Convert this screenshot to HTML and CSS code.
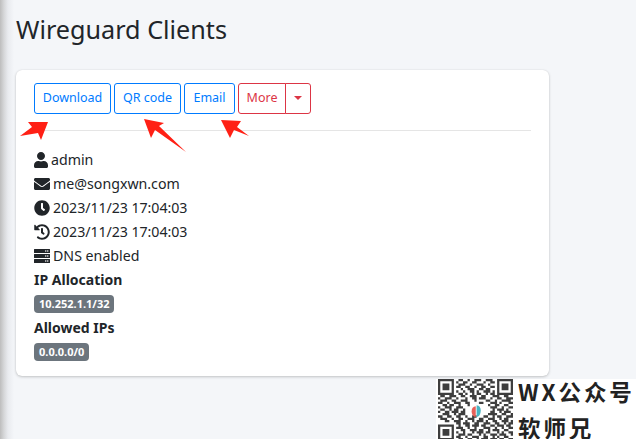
FILE: index.html
```html
<!DOCTYPE html>
<html lang="en">
<head>
<meta charset="utf-8">
<title>Wireguard Clients</title>
<link rel="stylesheet" href="styles.css">
</head>
<body>
<main class="page">
  <h1 class="title">Wireguard Clients</h1>
  <section class="card">
    <div class="actions">
      <button class="btn btn-blue btn-download">Download</button>
      <button class="btn btn-blue btn-qr">QR code</button>
      <button class="btn btn-blue btn-email">Email</button>
      <div class="split">
        <button class="btn btn-red btn-more">More</button>
        <button class="btn btn-red btn-caret" aria-label="More options"><span class="caret"></span></button>
      </div>
    </div>
    <hr class="rule">
    <ul class="info">
      <li><svg class="ico ico-user" viewBox="0 0 448 512"><path d="M224 256c70.7 0 128-57.3 128-128S294.7 0 224 0 96 57.3 96 128s57.3 128 128 128zm89.6 32h-16.7c-22.2 10.2-46.9 16-72.9 16s-50.6-5.8-72.9-16h-16.7C60.2 288 0 348.2 0 422.4V464c0 26.5 21.5 48 48 48h352c26.5 0 48-21.5 48-48v-41.6c0-74.2-60.2-134.4-134.4-134.4z"/></svg><span>admin</span></li>
      <li><svg class="ico" viewBox="0 0 512 512"><path d="M502.3 190.8c3.9-3.1 9.7-.2 9.7 4.7V400c0 26.5-21.5 48-48 48H48c-26.5 0-48-21.5-48-48V195.6c0-5 5.7-7.8 9.7-4.7 22.4 17.4 52.1 39.5 154.1 113.6 21.1 15.4 56.7 47.8 92.2 47.6 35.7.3 72-32.8 92.3-47.6 102-74.1 131.6-96.3 154-113.7zM256 320c23.2.4 56.6-29.2 73.4-41.4 132.7-96.3 142.8-104.7 173.4-128.7 5.8-4.5 9.2-11.5 9.2-18.9v-19c0-26.5-21.5-48-48-48H48C21.5 64 0 85.5 0 112v19c0 7.4 3.4 14.3 9.2 18.9 30.6 23.9 40.7 32.4 173.4 128.7 16.8 12.2 50.2 41.8 73.4 41.4z"/></svg><span>me@songxwn.com</span></li>
      <li><svg class="ico" viewBox="0 0 512 512"><path d="M256,8C119,8,8,119,8,256S119,504,256,504,504,393,504,256,393,8,256,8Zm92.49,313h0l-20,25a16,16,0,0,1-22.49,2.5h0l-67-49.72a40,40,0,0,1-15-31.23V112a16,16,0,0,1,16-16h32a16,16,0,0,1,16,16V256l58,42.5A16,16,0,0,1,348.49,321Z"/></svg><span class="stamp">2023/11/23 17:04:03</span></li>
      <li><svg class="ico" viewBox="0 0 512 512"><path d="M504 255.531c.253 136.64-111.18 248.372-247.82 248.468-59.015.042-113.223-20.53-155.822-54.911-11.077-8.94-11.905-25.541-1.839-35.607l11.267-11.267c8.609-8.609 22.353-9.551 31.891-1.984C173.062 425.135 212.781 440 256 440c101.705 0 184-82.311 184-184 0-101.705-82.311-184-184-184-48.814 0-93.149 18.969-126.068 49.932l50.754 50.754c10.08 10.08 2.941 27.314-11.313 27.314H24c-8.837 0-16-7.163-16-16V38.627c0-14.254 17.234-21.393 27.314-11.314l49.372 49.372C129.209 34.136 189.552 8 256 8c136.81 0 247.747 110.78 248 247.531zm-180.912 78.784l9.823-12.63c8.138-10.463 6.253-25.542-4.21-33.679L288 256.349V152c0-13.255-10.745-24-24-24h-16c-13.255 0-24 10.745-24 24v135.651l65.409 50.874c10.463 8.137 25.541 6.253 33.679-4.21z"/></svg><span class="stamp">2023/11/23 17:04:03</span></li>
      <li><svg class="ico" viewBox="0 0 512 512"><path fill-rule="evenodd" d="M16 32h480a16 16 0 0 1 16 16v96a16 16 0 0 1-16 16H16a16 16 0 0 1-16-16V48a16 16 0 0 1 16-16zm400 64a24 24 0 1 0 48 0 24 24 0 0 0-48 0zm-64 0a24 24 0 1 0 48 0 24 24 0 0 0-48 0zM16 192h480a16 16 0 0 1 16 16v96a16 16 0 0 1-16 16H16a16 16 0 0 1-16-16v-96a16 16 0 0 1 16-16zm400 64a24 24 0 1 0 48 0 24 24 0 0 0-48 0zm-64 0a24 24 0 1 0 48 0 24 24 0 0 0-48 0zM16 352h480a16 16 0 0 1 16 16v96a16 16 0 0 1-16 16H16a16 16 0 0 1-16-16v-96a16 16 0 0 1 16-16zm400 64a24 24 0 1 0 48 0 24 24 0 0 0-48 0zm-64 0a24 24 0 1 0 48 0 24 24 0 0 0-48 0z"/></svg><span>DNS enabled</span></li>
      <li class="label">IP Allocation</li>
      <li class="badge-row"><span class="badge">10.252.1.1/32</span></li>
      <li class="label">Allowed IPs</li>
      <li class="badge-row"><span class="badge">0.0.0.0/0</span></li>
    </ul>
  </section>
</main>

<svg class="arrows" viewBox="0 0 636 439" aria-hidden="true">
  <polygon points="48,122 41,140 38,133 20,136 32,127 28,122"/>
  <polygon points="144,119 164,123 159,126 186,152 155,130 151,138"/>
  <polygon points="221,120 241,121 237,127 249,136 234,130 230,138"/>
</svg>

<aside class="promo">
  <svg class="qr" viewBox="0 0 33 26.4" aria-hidden="true">
    <path class="qr-m" d="M0 .5h7M0 1.5h1M6 1.5h1M0 2.5h1M2 2.5h3M6 2.5h1M0 3.5h1M2 3.5h3M6 3.5h1M0 4.5h1M2 4.5h3M6 4.5h1M0 5.5h1M6 5.5h1M0 6.5h7M26 .5h7M26 1.5h1M32 1.5h1M26 2.5h1M28 2.5h3M32 2.5h1M26 3.5h1M28 3.5h3M32 3.5h1M26 4.5h1M28 4.5h3M32 4.5h1M26 5.5h1M32 5.5h1M26 6.5h7
    M9 .5h2M13 .5h1M16 .5h3M21 .5h3M8 1.5h1M11 1.5h2M15 1.5h2M20 1.5h1M23 1.5h2M9 2.5h3M14 2.5h1M17 2.5h3M22 2.5h1M8 3.5h2M12 3.5h2M16 3.5h1M19 3.5h2M23 3.5h2M10 4.5h1M13 4.5h3M18 4.5h2M21 4.5h2M8 5.5h1M11 5.5h1M14 5.5h2M17 5.5h1M20 5.5h3M24 5.5h1M9 6.5h2M12 6.5h1M15 6.5h1M17 6.5h2M21 6.5h1M23 6.5h2
    M1 7.5h2M5 7.5h3M10 7.5h2M14 7.5h3M19 7.5h2M24 7.5h3M29 7.5h2M0 8.5h1M3 8.5h3M8 8.5h1M12 8.5h1M15 8.5h2M18 8.5h3M23 8.5h1M26 8.5h2M30 8.5h3M1 9.5h3M6 9.5h2M10 9.5h3M16 9.5h1M21 9.5h2M25 9.5h1M28 9.5h4M0 10.5h2M4 10.5h1M7 10.5h3M12 10.5h2M18 10.5h2M23 10.5h3M27 10.5h1M31 10.5h2M2 11.5h2M5 11.5h2M9 11.5h1M13 11.5h1M22 11.5h1M25 11.5h2M29 11.5h2
    M0 12.5h1M3 12.5h3M8 12.5h3M23 12.5h3M28 12.5h1M31 12.5h2M1 13.5h2M5 13.5h1M7 13.5h2M11 13.5h1M24 13.5h1M26 13.5h3M30 13.5h1M0 14.5h1M3 14.5h2M6 14.5h3M10 14.5h2M23 14.5h2M27 14.5h1M29 14.5h3M2 15.5h3M7 15.5h1M9 15.5h3M22 15.5h4M28 15.5h2M32 15.5h1M0 16.5h2M4 16.5h2M8 16.5h2M12 16.5h1M15 16.5h2M20 16.5h2M24 16.5h1M26 16.5h2M30 16.5h3
    M1 17.5h3M6 17.5h1M9 17.5h2M13 17.5h3M18 17.5h2M22 17.5h3M27 17.5h1M29 17.5h2M3 18.5h2M7 18.5h3M12 18.5h1M15 18.5h1M17 18.5h3M21 18.5h1M24 18.5h2M28 18.5h3M32 18.5h1M8 19.5h2M11 19.5h3M16 19.5h2M20 19.5h3M25 19.5h2M29 19.5h1M31 19.5h2
    M0 20.5h7M9 20.5h1M12 20.5h2M15 20.5h3M19 20.5h2M23 20.5h2M26 20.5h3M30 20.5h2M0 21.5h1M6 21.5h1M8 21.5h3M13 21.5h1M16 21.5h1M20 21.5h3M25 21.5h1M28 21.5h1M31 21.5h2M0 22.5h1M2 22.5h3M6 22.5h1M10 22.5h2M14 22.5h3M18 22.5h2M22 22.5h1M24 22.5h3M29 22.5h2M0 23.5h1M2 23.5h3M6 23.5h1M8 23.5h1M11 23.5h1M15 23.5h1M17 23.5h3M21 23.5h2M26 23.5h1M28 23.5h1M31 23.5h2M0 24.5h1M2 24.5h3M6 24.5h1M9 24.5h3M13 24.5h2M18 24.5h1M20 24.5h1M23 24.5h3M27 24.5h3M32 24.5h1M0 25.5h1M6 25.5h1M8 25.5h2M12 25.5h1M15 25.5h3M20 25.5h2M24 25.5h1M26 25.5h1M29 25.5h2M0 26.5h7M9 26.5h2M13 26.5h2M17 26.5h1M19 26.5h3M23 26.5h3M27 26.5h2M31 26.5h2"/>
    <path class="qr-teal" d="M17 11.5c1.2 0 1.8 1 1.8 2.4s-.6 2.8-1.8 2.8z"/>
    <path class="qr-red" d="M16.6 12c-1.200 0-1.800 1-1.800 2.200s.6 2.500 1.800 2.500z"/>
  </svg>
  <div class="promo-text">
    <span>WX公众号</span>
    <span>软师兄</span>
  </div>
</aside>
</body>
</html>
```
FILE: styles.css
```css
* { box-sizing: border-box; }

html, body { height: 100%; }

body {
  margin: 0;
  height: 439px;
  overflow: hidden;
  position: relative;
  font-family: "Noto Sans", "Liberation Sans", sans-serif;
  color: #212529;
  background: linear-gradient(90deg, #bdbdbd 0, #d6d7d9 4px, #e9ebef 8px, #f4f6f9 14px) #f4f6f9;
}

.page { padding: 10px 0 0 16px; }

.title {
  margin: 0 0 22px;
  font-size: 25.2px;
  font-weight: 400;
  line-height: 38px;
}

.card {
  width: 533px;
  height: 306px;
  padding: 13px 18px;
  background: #fff;
  border-radius: 6px;
  box-shadow: 0 0 1px rgba(0, 0, 0, .125), 0 1px 3px rgba(0, 0, 0, .2);
}

.actions { display: flex; gap: 3px; height: 31px; }

.btn {
  height: 31px;
  padding: 0;
  font: 400 12.5px/1 "Noto Sans", "Liberation Sans", sans-serif;
  background: #fff;
  border: 1px solid;
  border-radius: 3px;
}

.btn-blue { color: #007bff; border-color: #007bff; }
.btn-red { color: #dc3545; border-color: #dc3545; }
.btn-download { width: 77px; }
.btn-qr { width: 67px; }
.btn-email { width: 51px; }

.split { display: flex; }
.btn-more { width: 48px; border-radius: 3px 0 0 3px; }
.btn-caret {
  width: 26px;
  margin-left: -1px;
  border-radius: 0 3px 3px 0;
  display: flex;
  align-items: center;
  justify-content: center;
}

.caret {
  width: 0;
  height: 0;
  margin-bottom: 2px;
  border-top: 4px solid #dc3545;
  border-left: 4px solid transparent;
  border-right: 4px solid transparent;
}

.rule {
  margin: 16px 0 0;
  border: 0;
  border-top: 1px solid #e5e5e5;
}

.info {
  list-style: none;
  margin: 17px 0 0;
  padding: 0;
  font-size: 14.2px;
  line-height: 24px;
}

.info li { display: flex; align-items: center; height: 24px; }

.stamp { letter-spacing: -.06px; }

.ico { width: 16px; height: 16px; margin-right: 3px; fill: #212529; flex: none; }
.ico-user { width: 14px; margin-right: 3px; }

.info .label { font-weight: 700; font-size: 14px; }

.badge {
  display: block;
  height: 18px;
  padding: 0 5px;
  font-size: 11px;
  font-weight: 700;
  line-height: 18px;
  color: #fff;
  background: #6c757d;
  border-radius: 4px;
}

.arrows {
  position: absolute;
  left: 0;
  top: 0;
  width: 636px;
  height: 439px;
  fill: #ff2015;
  pointer-events: none;
}

.promo {
  position: absolute;
  left: 436px;
  top: 379px;
  width: 200px;
  height: 60px;
  display: flex;
  gap: 5px;
  padding-left: 2px;
  background: #fff;
}

.qr {
  width: 75px;
  height: 60px;
  flex: none;
  filter: blur(.5px);
  opacity: .85;
}

.qr-m { stroke: #1d1d1d; stroke-width: 1; fill: none; }
.qr-teal { fill: #2aa8b8; }
.qr-red { fill: #e2453d; }

.promo-text {
  display: flex;
  flex-direction: column;
  gap: 12px;
  font-family: "Noto Sans CJK SC", "Noto Sans", sans-serif;
  font-size: 22.5px;
  font-weight: 700;
  line-height: 24px;
  letter-spacing: 2.9px;
  color: #222;
  white-space: nowrap;
}
```
